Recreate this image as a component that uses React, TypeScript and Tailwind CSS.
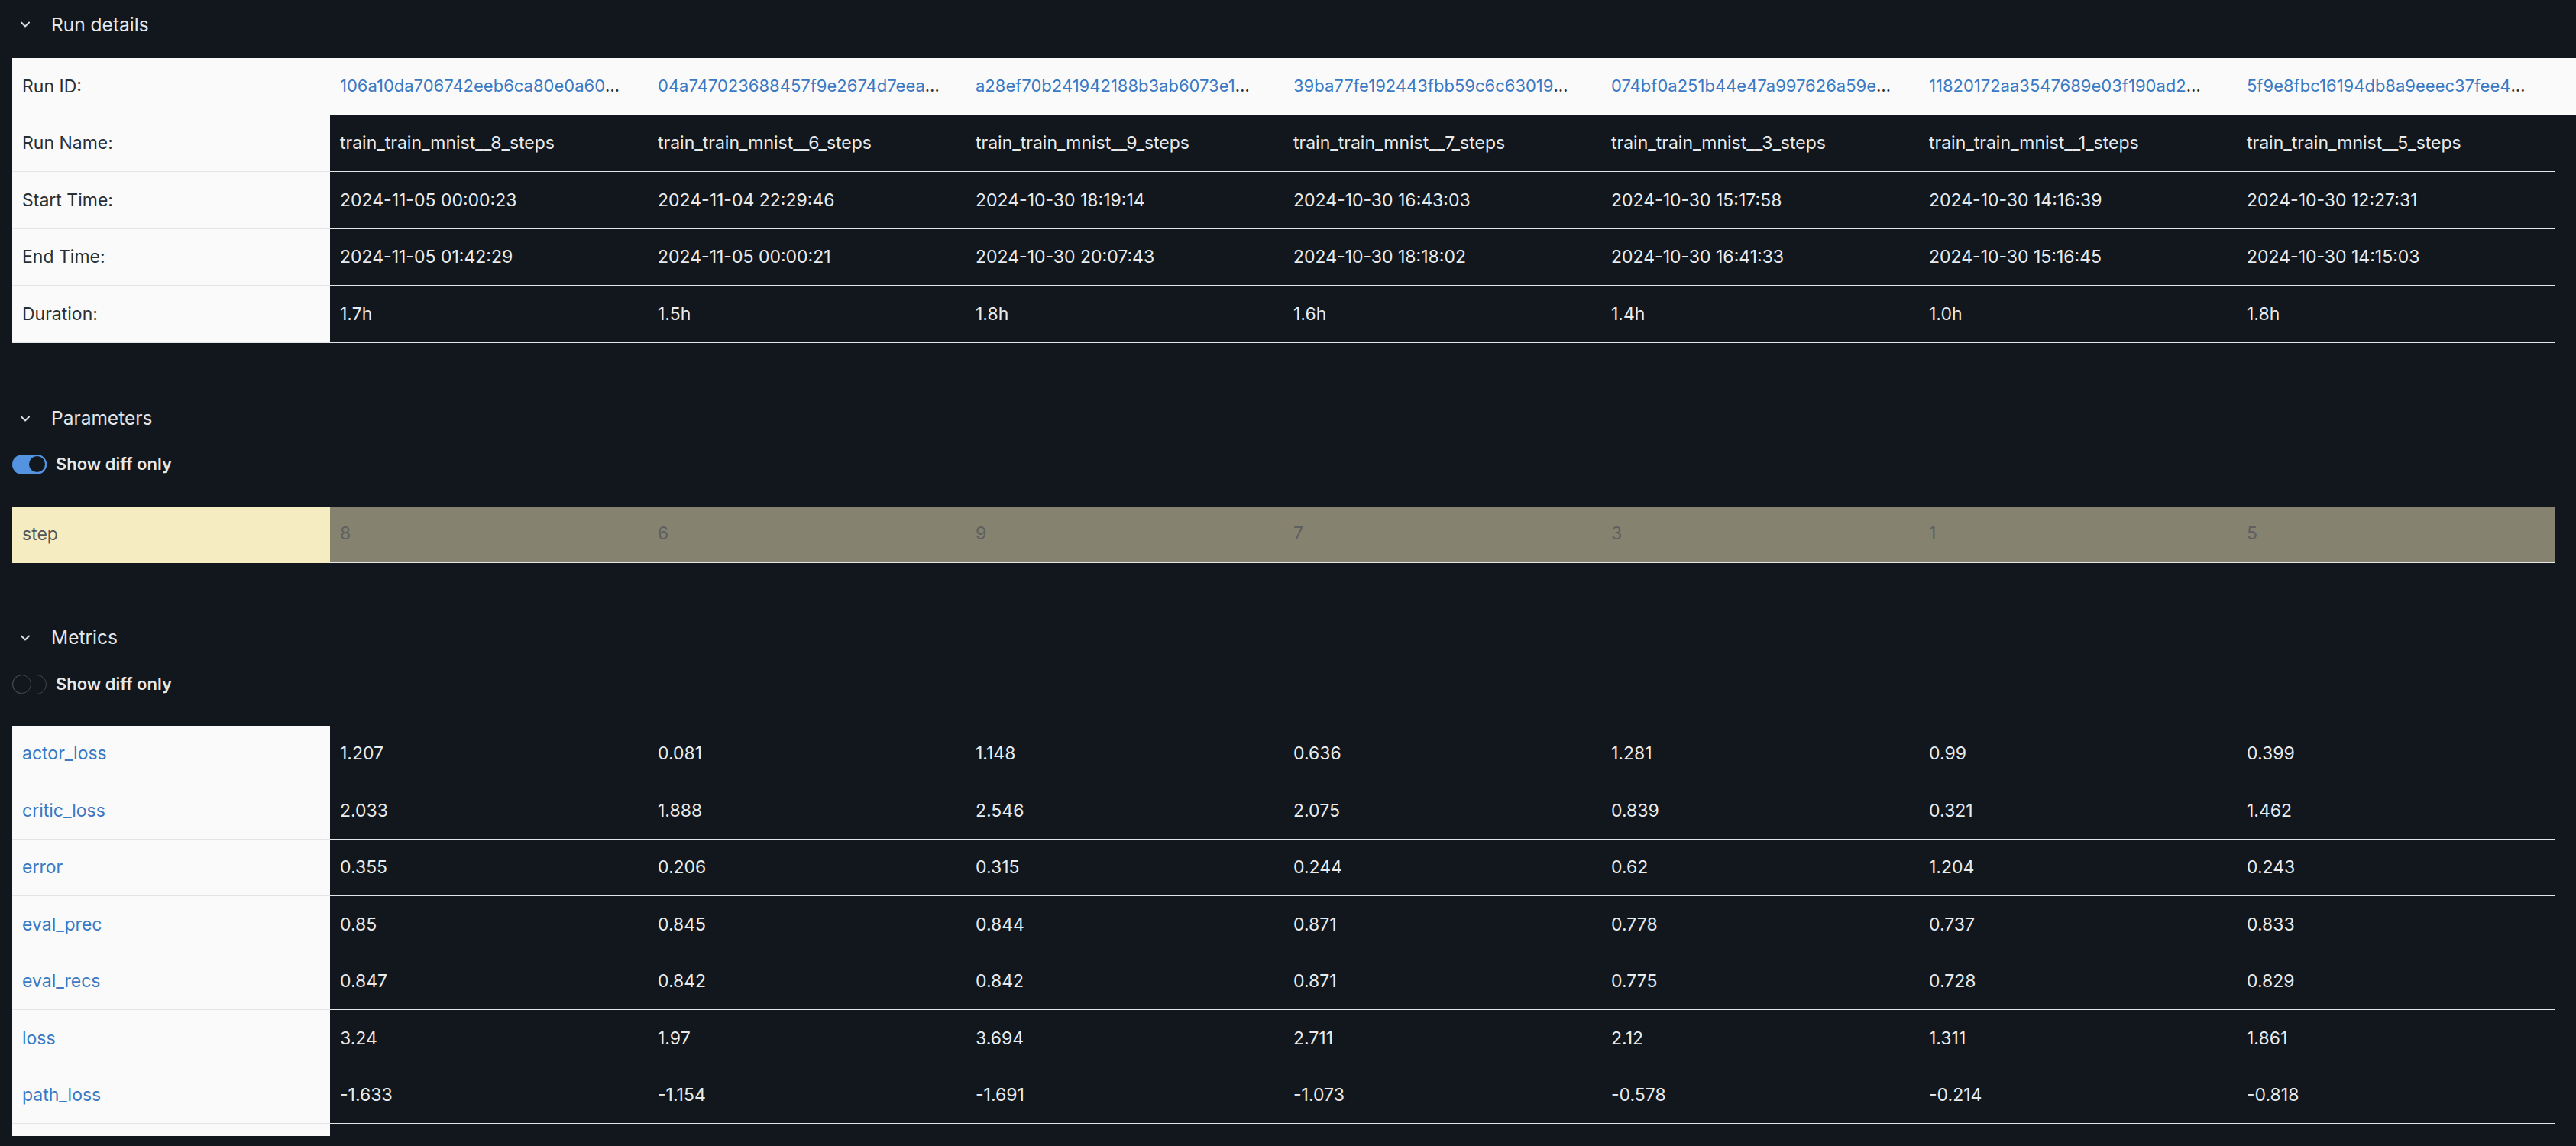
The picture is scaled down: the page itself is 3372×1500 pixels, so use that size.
import { ChevronDown } from 'lucide-react';

type Cell = string;

const RUN_IDS = [
  '106a10da706742eeb6ca80e0a60',
  '04a747023688457f9e2674d7eea',
  'a28ef70b241942188b3ab6073e1',
  '39ba77fe192443fbb59c6c63019',
  '074bf0a251b44e47a997626a59e',
  '11820172aa3547689e03f190ad2',
  '5f9e8fbc16194db8a9eeec37fee4',
];

const DETAILS: { label: string; values: Cell[] }[] = [
  {
    label: 'Run Name:',
    values: [8, 6, 9, 7, 3, 1, 5].map(n => `train_train_mnist__${n}_steps`),
  },
  {
    label: 'Start Time:',
    values: [
      '2024-11-05 00:00:23',
      '2024-11-04 22:29:46',
      '2024-10-30 18:19:14',
      '2024-10-30 16:43:03',
      '2024-10-30 15:17:58',
      '2024-10-30 14:16:39',
      '2024-10-30 12:27:31',
    ],
  },
  {
    label: 'End Time:',
    values: [
      '2024-11-05 01:42:29',
      '2024-11-05 00:00:21',
      '2024-10-30 20:07:43',
      '2024-10-30 18:18:02',
      '2024-10-30 16:41:33',
      '2024-10-30 15:16:45',
      '2024-10-30 14:15:03',
    ],
  },
  { label: 'Duration:', values: ['1.7h', '1.5h', '1.8h', '1.6h', '1.4h', '1.0h', '1.8h'] },
];

const STEPS = ['8', '6', '9', '7', '3', '1', '5'];

const METRICS: { name: string; values: Cell[] }[] = [
  { name: 'actor_loss', values: ['1.207', '0.081', '1.148', '0.636', '1.281', '0.99', '0.399'] },
  { name: 'critic_loss', values: ['2.033', '1.888', '2.546', '2.075', '0.839', '0.321', '1.462'] },
  { name: 'error', values: ['0.355', '0.206', '0.315', '0.244', '0.62', '1.204', '0.243'] },
  { name: 'eval_prec', values: ['0.85', '0.845', '0.844', '0.871', '0.778', '0.737', '0.833'] },
  { name: 'eval_recs', values: ['0.847', '0.842', '0.842', '0.871', '0.775', '0.728', '0.829'] },
  { name: 'loss', values: ['3.24', '1.97', '3.694', '2.711', '2.12', '1.311', '1.861'] },
  { name: 'path_loss', values: ['-1.633', '-1.154', '-1.691', '-1.073', '-0.578', '-0.214', '-0.818'] },
  // next row is scrolled out of view, only its top edge shows
  { name: '', values: ['', '', '', '', '', '', ''] },
];

const ROW = 'grid grid-cols-[repeat(8,416px)] h-[74.5px]';
const CELL = 'flex items-center px-[13px] border-b border-[#e3e6e9] overflow-hidden whitespace-nowrap';
const LABEL = `${CELL} bg-[#fafafa] text-[#2a2f34]`;
const DATA = `${CELL} text-[#e8ebee]`;

function SectionHeader({ title }: { title: string }) {
  return (
    <div className="flex items-center h-16 text-[#e3e7eb]">
      <ChevronDown size={20} strokeWidth={2.5} className="ml-[23px] text-[#d9dde1]" />
      <span className="ml-[24px] text-[24.5px]">{title}</span>
    </div>
  );
}

function Toggle({ on }: { on: boolean }) {
  return (
    <div className="flex items-center gap-3 h-[26px]">
      {on ? (
        <span className="flex items-center justify-end w-[45px] h-[26px] rounded-full bg-[#5393e0]">
          <span className="w-[25px] h-[25px] rounded-full bg-[#11171c] border-2 border-[#5393e0]" />
        </span>
      ) : (
        <span className="flex items-center w-[45px] h-[26px] rounded-full border-[1.5px] border-[#3d4750]">
          <span className="w-[25px] h-[25px] -ml-[1.5px] rounded-full border-[1.5px] border-[#3d4750]" />
        </span>
      )}
      <span className="text-[22px] font-semibold text-[#e6e9ec]">Show diff only</span>
    </div>
  );
}

export default function App() {
  return (
    <div
      className="min-h-[1500px] bg-[#11171c] pl-4 text-[23px]"
      style={{ fontFamily: 'Inter, "Noto Sans", sans-serif' }}
    >
      <div className="-ml-4">
        <SectionHeader title="Run details" />
      </div>

      <div className="mt-3">
        <div className={`${ROW} bg-[#fafafa]`}>
          <div className={LABEL}>Run ID:</div>
          {RUN_IDS.map(id => (
            <div key={id} className={`${LABEL} text-[#1f2328] text-[22px]`}>
              <span className="text-[#3a79c3]">{id}</span>
              <span>…</span>
            </div>
          ))}
        </div>
        {DETAILS.map(row => (
          <div key={row.label} className={ROW}>
            <div className={LABEL}>{row.label}</div>
            {row.values.map((v, i) => (
              <div key={i} className={DATA}>{v}</div>
            ))}
          </div>
        ))}
      </div>

      <div className="-ml-4 mt-[67px]">
        <SectionHeader title="Parameters" />
      </div>
      <div className="mt-[15px]">
        <Toggle on />
      </div>
      <div className="mt-[42px]">
        <div className="grid grid-cols-[repeat(8,416px)] h-[74px]">
          <div className="flex items-center px-[13px] bg-[#f6ecc2] text-[#55575a]">step</div>
          {STEPS.map((v, i) => (
            <div key={i} className="flex items-center px-[13px] bg-[#858370] text-[#5e5f5f] border-b-2 border-[#e6e8ea]">
              {v}
            </div>
          ))}
        </div>
      </div>

      <div className="-ml-4 mt-[66px]">
        <SectionHeader title="Metrics" />
      </div>
      <div className="mt-4">
        <Toggle on={false} />
      </div>
      <div className="mt-[41px] h-[537px] overflow-hidden">
        {METRICS.map((row, r) => (
          <div key={r} className={ROW}>
            <div className={`${LABEL} text-[#3a79c3]`}>{row.name}</div>
            {row.values.map((v, i) => (
              <div key={i} className={DATA}>{v}</div>
            ))}
          </div>
        ))}
      </div>
    </div>
  );
}
